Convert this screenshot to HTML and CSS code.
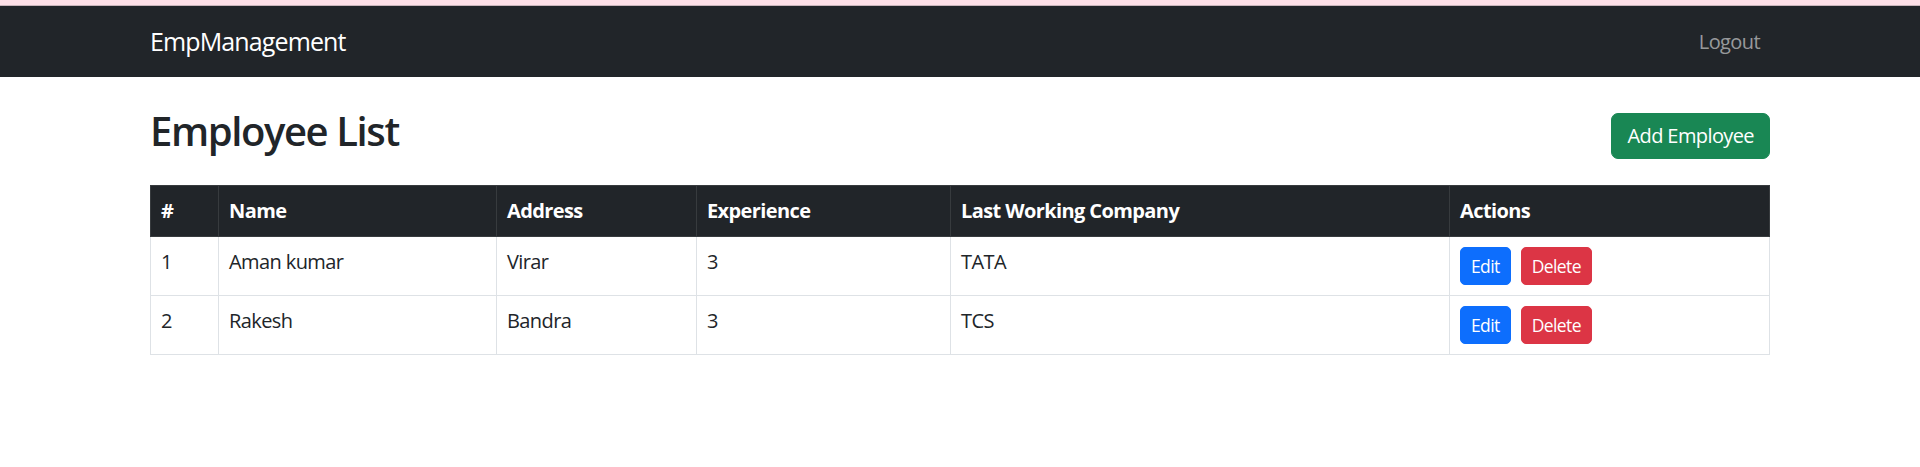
FILE: index.html
```html
<!DOCTYPE html>
<html lang="en">
<head>
<meta charset="utf-8">
<title>EmpManagement</title>
<link rel="stylesheet" href="styles.css">
</head>
<body>
<div class="topstrip"></div>
<nav class="navbar">
  <div class="container nav-inner">
    <a class="brand" href="#">EmpManagement</a>
    <a class="nav-link" href="#">Logout</a>
  </div>
</nav>
<main class="container page">
  <div class="page-head">
    <h2 class="title">Employee List</h2>
    <button class="btn btn-success">Add Employee</button>
  </div>
  <table class="emp-table">
    <colgroup>
      <col class="col-num"><col class="col-name"><col class="col-addr"><col class="col-exp"><col class="col-company"><col class="col-actions">
    </colgroup>
    <thead>
      <tr><th>#</th><th>Name</th><th>Address</th><th>Experience</th><th>Last Working Company</th><th>Actions</th></tr>
    </thead>
    <tbody>
      <tr>
        <td>1</td><td>Aman kumar</td><td>Virar</td><td>3</td><td>TATA</td>
        <td><button class="btn-sm btn-primary">Edit</button><button class="btn-sm btn-danger">Delete</button></td>
      </tr>
      <tr>
        <td>2</td><td>Rakesh</td><td>Bandra</td><td>3</td><td>TCS</td>
        <td><button class="btn-sm btn-primary">Edit</button><button class="btn-sm btn-danger">Delete</button></td>
      </tr>
    </tbody>
  </table>
</main>
</body>
</html>
```

FILE: styles.css
```css
* { box-sizing: border-box; }

html, body {
  margin: 0;
  padding: 0;
  background: #ffffff;
  color: #212529;
  font-family: "Open Sans", "Noto Sans", "Liberation Sans", sans-serif;
  font-size: 20px;
  line-height: 1.5;
  letter-spacing: -0.03em;
}

.topstrip {
  height: 6px;
  background: #fde0e7;
  border-bottom: 1px solid #c9b5bb;
}

.container {
  max-width: 1650px;
  margin: 0 auto;
  padding: 0 15px;
}

.navbar {
  background: #212529;
  height: 71px;
  display: flex;
  align-items: center;
}

.nav-inner {
  width: 100%;
  display: flex;
  justify-content: space-between;
  align-items: center;
}

.brand {
  color: #ffffff;
  text-decoration: none;
  font-size: 25px;
  line-height: 37.5px;
  padding: 7px 0 6px;
  letter-spacing: -0.035em;
}

.nav-link {
  color: rgba(255, 255, 255, 0.55);
  text-decoration: none;
  font-size: 20px;
  line-height: 30px;
  padding: 10px;
}

.page {
  padding-top: 30px;
}

.page-head {
  display: flex;
  justify-content: space-between;
  align-items: center;
  margin-bottom: 20px;
}

.title {
  margin: 0 0 10px;
  font-size: 40px;
  font-weight: 600;
  line-height: 1.2;
  letter-spacing: -0.035em;
}

.btn {
  font-family: inherit;
  letter-spacing: inherit;
  font-size: 20px;
  line-height: 30px;
  padding: 7px 15px;
  border: 1px solid transparent;
  border-radius: 7px;
  color: #ffffff;
  cursor: pointer;
}

.btn-success {
  background: #198754;
  border-color: #198754;
}

.emp-table {
  width: 100%;
  border-collapse: collapse;
  table-layout: fixed;
  vertical-align: top;
  font-size: 20px;
  line-height: 30px;
}

.col-num { width: 68px; }
.col-name { width: 278px; }
.col-addr { width: 200px; }
.col-exp { width: 254px; }
.col-company { width: 499px; }

.emp-table th,
.emp-table td {
  padding: 10px;
  border: 1px solid #dee2e6;
  text-align: left;
  vertical-align: top;
}

.emp-table thead th {
  background: #212529;
  color: #ffffff;
  border-color: #373b3e;
  font-weight: 700;
}

.btn-sm {
  display: inline-block;
  font-family: inherit;
  letter-spacing: inherit;
  font-size: 17.5px;
  line-height: 26px;
  padding: 5px 10px;
  border: 1px solid transparent;
  border-radius: 5px;
  color: #ffffff;
  vertical-align: baseline;
  cursor: pointer;
}

.btn-primary {
  background: #0d6efd;
  border-color: #0d6efd;
  margin-right: 10px;
}

.btn-danger {
  background: #dc3545;
  border-color: #dc3545;
}
```
